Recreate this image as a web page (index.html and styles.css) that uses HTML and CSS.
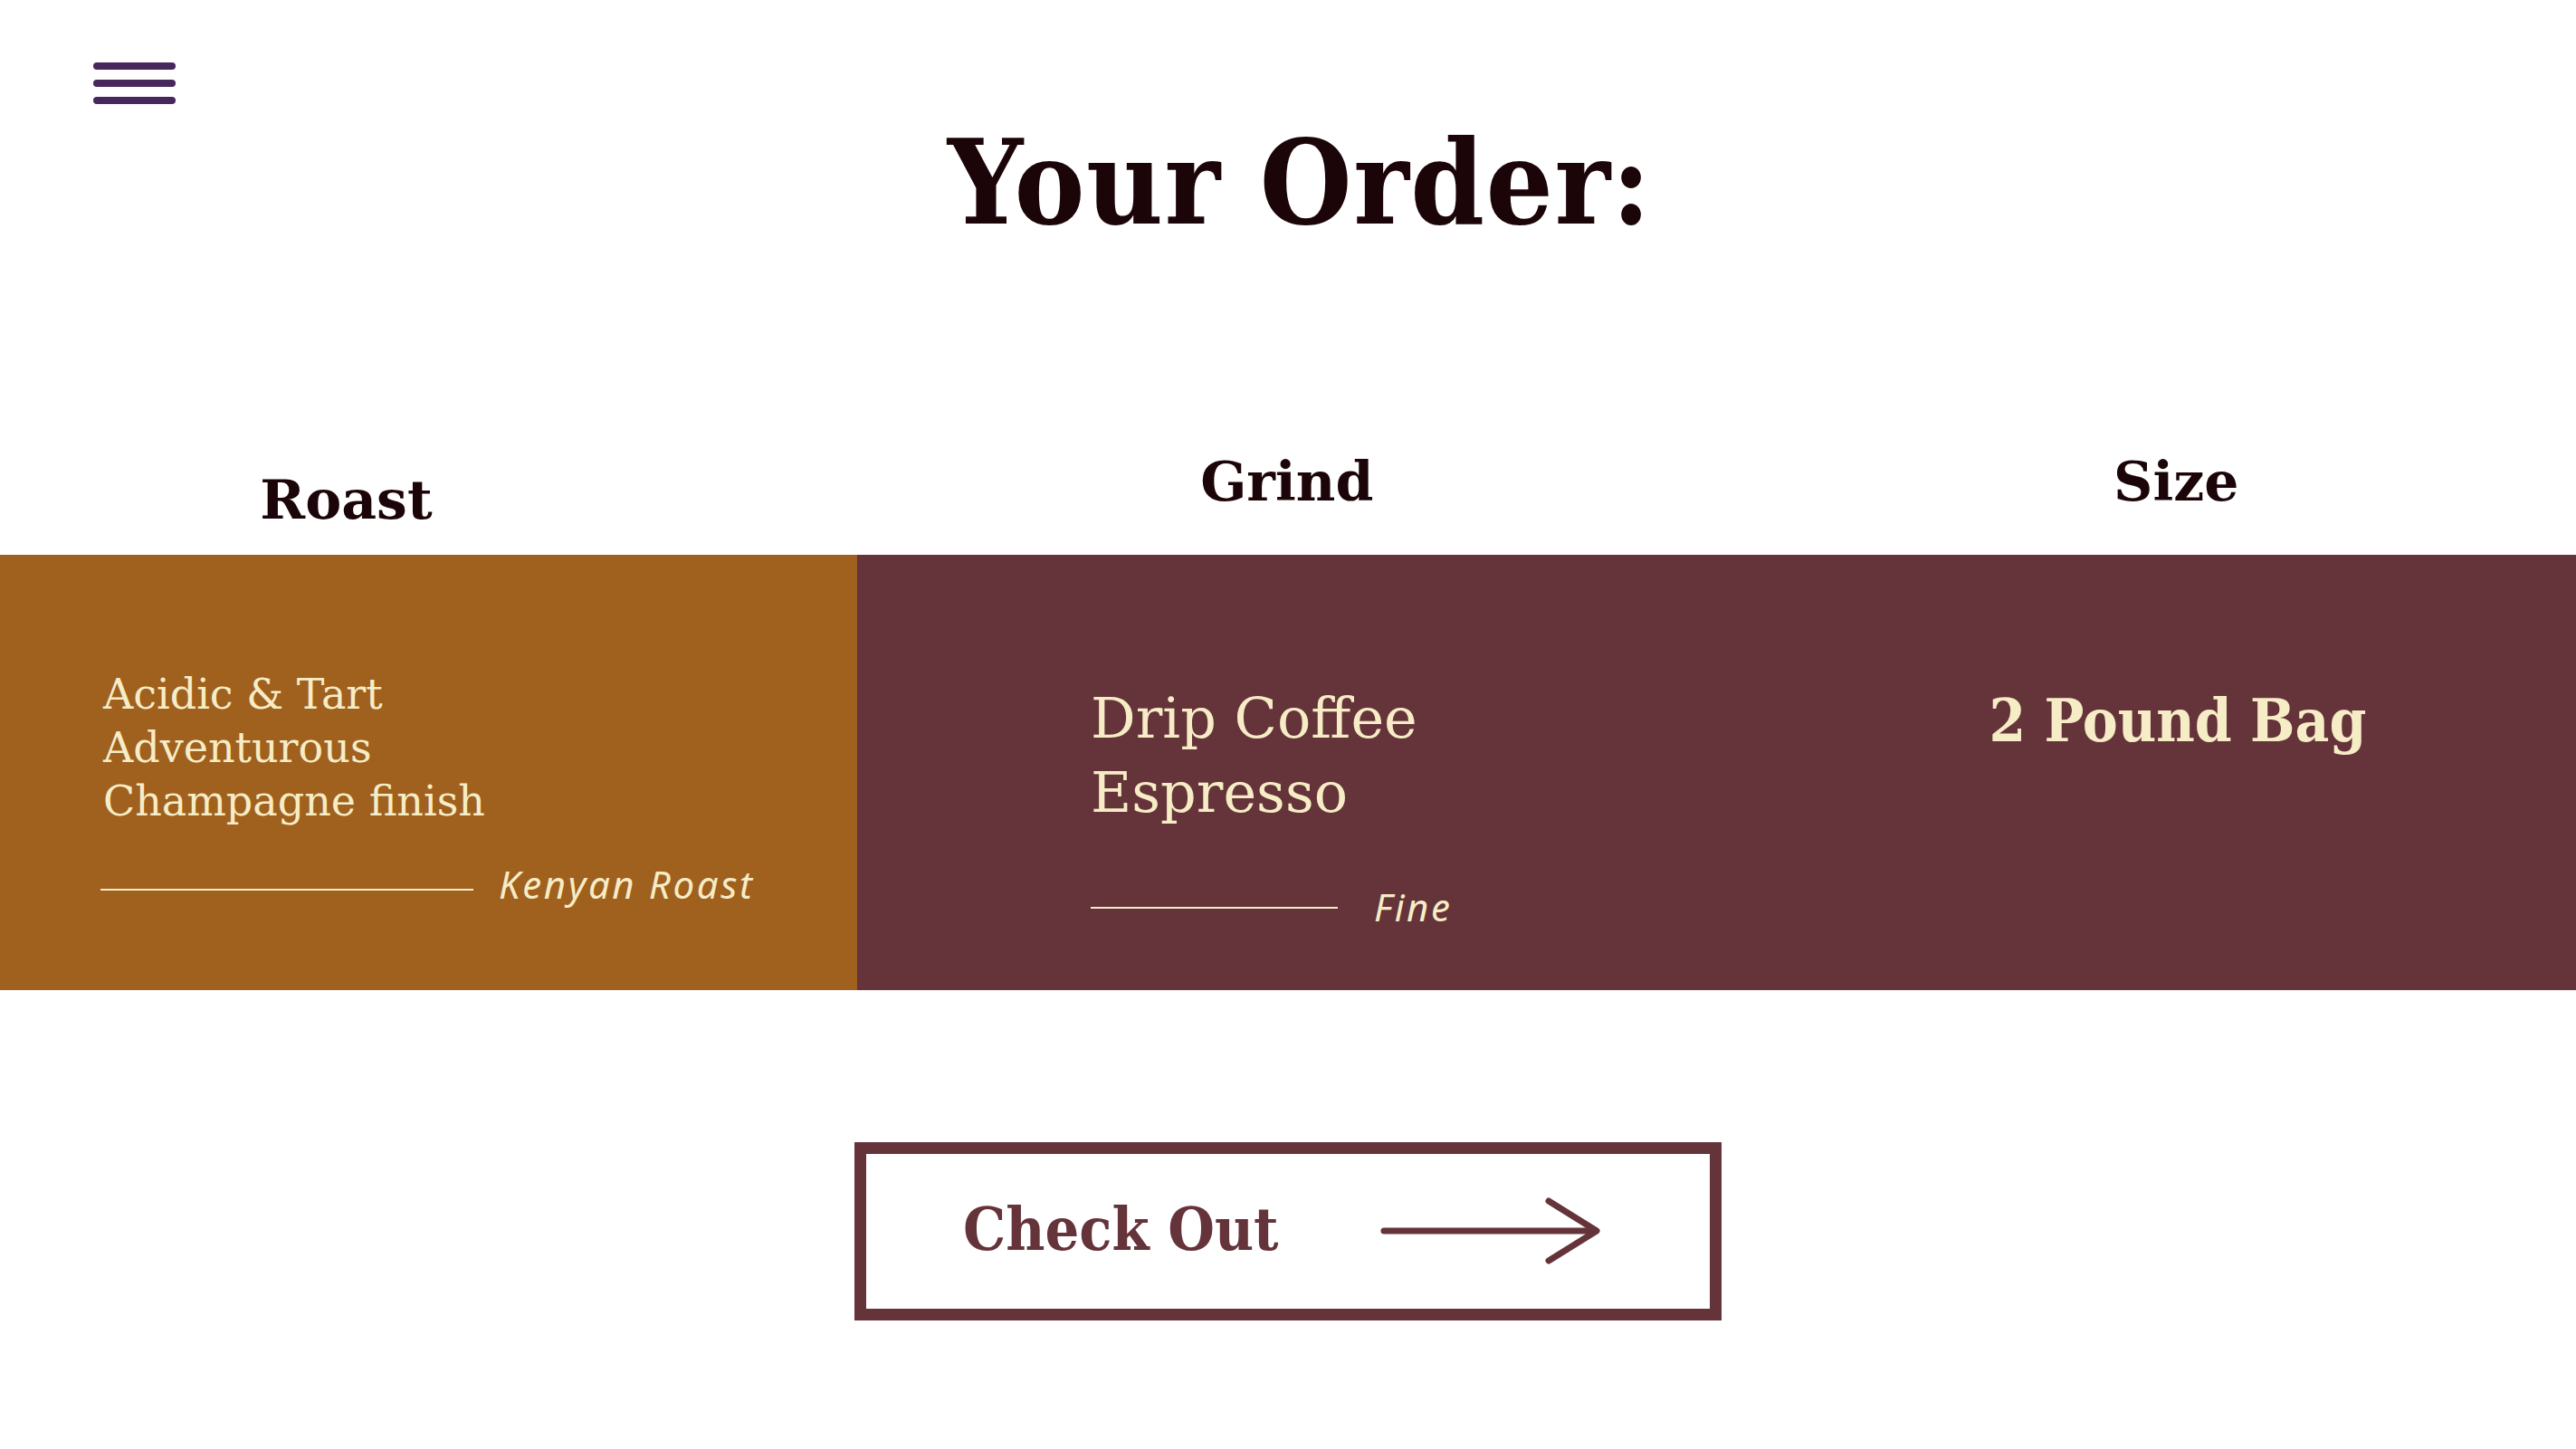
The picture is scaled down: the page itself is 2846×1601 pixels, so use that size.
FILE: index.html
```html
<!DOCTYPE html>
<html lang="en">
<head>
<meta charset="utf-8">
<title>Your Order</title>
<link rel="stylesheet" href="styles.css">
</head>
<body>
<div class="page">
  <header class="top">
    <svg class="menu" width="91" height="46" viewBox="0 0 91 46" aria-label="Menu">
      <line x1="4" y1="4" x2="87" y2="4"/>
      <line x1="4" y1="23" x2="87" y2="23"/>
      <line x1="4" y1="42" x2="87" y2="42"/>
    </svg>
    <h1 class="title">Your Order:</h1>
  </header>

  <div class="labels">
    <div class="label label-roast">Roast</div>
    <div class="label label-grind">Grind</div>
    <div class="label label-size">Size</div>
  </div>

  <section class="panels">
    <div class="panel panel-roast">
      <div class="notes">
        <div>Acidic &amp; Tart</div>
        <div>Adventurous</div>
        <div>Champagne finish</div>
      </div>
      <div class="tag tag-roast">
        <span class="rule rule-roast"></span>
        <span class="tag-text">Kenyan Roast</span>
      </div>
    </div>
    <div class="panel panel-grind">
      <div class="options">
        <div>Drip Coffee</div>
        <div>Espresso</div>
      </div>
      <div class="tag tag-grind">
        <span class="rule rule-grind"></span>
        <span class="tag-text tag-fine">Fine</span>
      </div>
    </div>
    <div class="panel panel-size">
      <div class="size-value">2 Pound Bag</div>
    </div>
  </section>

  <div class="actions">
    <button class="checkout" type="button">
      <span class="checkout-label">Check Out</span>
      <svg class="arrow" width="245" height="74" viewBox="0 0 245 74">
        <line x1="4" y1="37" x2="238" y2="37"/>
        <polyline points="186,4 239,37 186,70"/>
      </svg>
    </button>
  </div>
</div>
</body>
</html>
```

FILE: styles.css
```css
html, body {
  margin: 0;
  padding: 0;
  background: #ffffff;
}

.page {
  width: 2846px;
  min-height: 1601px;
  font-family: "DejaVu Serif", "Liberation Serif", serif;
  color: #1c0508;
}

.top {
  padding-top: 69px;
}

.menu {
  display: block;
  margin-left: 103px;
  stroke: #47275c;
  stroke-width: 8;
  stroke-linecap: round;
}

.title {
  margin: 10px 0 0;
  text-align: center;
  font-family: "DejaVu Serif Condensed", "DejaVu Serif", serif;
  font-stretch: semi-condensed;
  font-weight: 700;
  font-size: 130px;
  line-height: 153.6px;
  letter-spacing: 1.5px;
  color: #1c0508;
  padding-left: 26px;
}

.labels {
  display: grid;
  grid-template-columns: 947px 1fr 1fr;
  align-items: start;
  margin-top: 217px;
}

.label {
  font-family: "DejaVu Serif", serif;
  font-weight: 700;
  font-size: 60px;
  line-height: 72px;
  text-align: center;
}

.label-roast {
  padding-top: 20px;
  padding-right: 182px;
}

.label-size {
  padding-left: 66px;
}

.panels {
  display: grid;
  grid-template-columns: 947px 1fr 1fr;
  height: 481px;
  margin-top: 25px;
  color: #f6ecc6;
}

.panel {
  display: flex;
  flex-direction: column;
  align-items: flex-start;
}

.panel-roast {
  background: #a0601e;
  padding: 125px 0 0 114px;
}

.panel-grind {
  background: #65333a;
  padding: 140px 0 0 258px;
}

.panel-size {
  background: #65333a;
  padding: 142px 0 0 301px;
}

.notes {
  font-size: 46px;
  line-height: 59px;
}

.options {
  font-size: 62px;
  line-height: 82px;
}

.size-value {
  font-family: "DejaVu Serif Condensed", "DejaVu Serif", serif;
  font-stretch: semi-condensed;
  font-weight: 700;
  font-size: 65px;
  line-height: 82px;
}

.tag {
  display: flex;
  align-items: flex-start;
}

.tag-roast {
  margin-top: 41px;
  margin-left: -3px;
}

.tag-grind {
  margin-top: 64px;
}

.rule {
  display: block;
  height: 2px;
  background: #f6ecc6;
}

.rule-roast {
  width: 412px;
  margin-top: 26px;
}

.rule-grind {
  width: 273px;
  margin-top: 21px;
}

.tag-text {
  font-family: "Noto Sans", "Open Sans", sans-serif;
  font-style: italic;
  font-size: 42px;
  line-height: 41px;
  letter-spacing: 2.6px;
  margin-left: 28px;
}

.tag-fine {
  margin-left: 40px;
}

.actions {
  display: flex;
  justify-content: center;
  margin-top: 168px;
}

.checkout {
  display: flex;
  align-items: center;
  width: 958px;
  height: 197px;
  box-sizing: border-box;
  border: 13px solid #65333a;
  background: #ffffff;
  padding: 0 0 0 107px;
  margin: 0;
  cursor: pointer;
}

.checkout-label {
  display: block;
  width: 461px;
  text-align: left;
  font-family: "DejaVu Serif Condensed", "DejaVu Serif", serif;
  font-stretch: semi-condensed;
  font-weight: 700;
  font-size: 66px;
  line-height: 66px;
  color: #65333a;
  margin-top: -5px;
}

.arrow {
  display: block;
  stroke: #65333a;
  stroke-width: 7;
  stroke-linecap: round;
  stroke-linejoin: round;
  fill: none;
}
```
